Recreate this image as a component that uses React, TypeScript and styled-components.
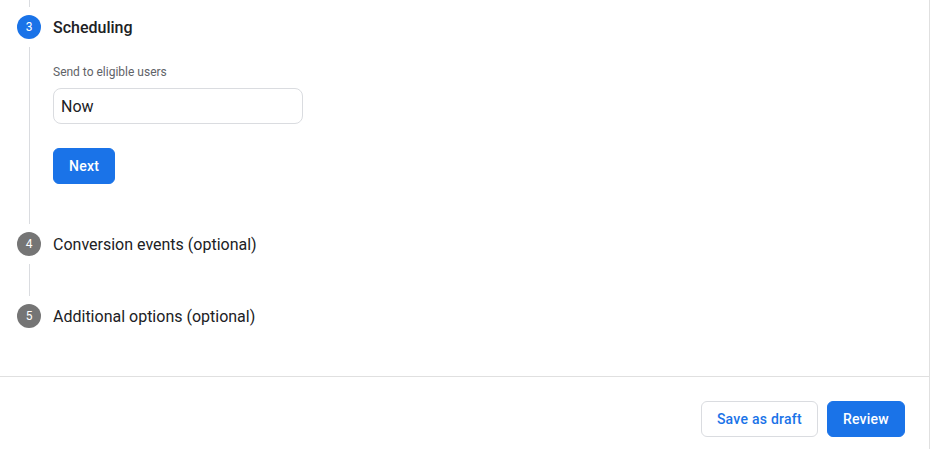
import { createGlobalStyle, styled } from 'styled-components'

const GlobalStyle = createGlobalStyle`
  html, body {
    margin: 0;
    padding: 0;
    background: #fff;
  }
  body {
    font-family: Roboto, "Liberation Sans", Arial, sans-serif;
    color: #202124;
    -webkit-font-smoothing: antialiased;
  }
`

const Page = styled.div`
  width: 929px;
  height: 449px;
  border-right: 1px solid #e0e0e0;
  background: #fff;
  display: flex;
  flex-direction: column;
  overflow: hidden;
`

const Stepper = styled.div`
  height: 376px;
  flex-shrink: 0;
  border-bottom: 1px solid #e0e0e0;
  padding-left: 17px;
  display: flex;
  flex-direction: column;
`

const Tail = styled.div`
  width: 1px;
  height: 7px;
  flex-shrink: 0;
  margin: 0 0 8px 12px;
  background: #dadce0;
`

const Step = styled.div`
  display: flex;
  gap: 12px;
  flex-shrink: 0;
`

const Rail = styled.div`
  width: 24px;
  display: flex;
  flex-direction: column;
  align-items: center;
  flex-shrink: 0;
`

const Circle = styled.div<{ active?: boolean }>`
  width: 24px;
  height: 24px;
  border-radius: 50%;
  background: ${({ active }) => (active ? '#1a73e8' : '#757575')};
  color: #fff;
  font-size: 12px;
  display: flex;
  align-items: center;
  justify-content: center;
  flex-shrink: 0;
`

const Connector = styled.div`
  flex: 1;
  width: 1px;
  margin: 8px 0;
  background: #dadce0;
`

const Body = styled.div<{ last?: boolean }>`
  display: flex;
  flex-direction: column;
  padding-bottom: ${({ last }) => (last ? '0' : '48px')};
`

const Title = styled.div<{ active?: boolean }>`
  font-size: 16px;
  line-height: 24px;
  padding-top: 1px;
  margin-bottom: -1px;
  font-weight: ${({ active }) => (active ? 500 : 400)};
  color: #202124;
`

const Label = styled.label`
  margin-top: 25px;
  font-size: 12px;
  line-height: 16px;
  color: #5f6368;
`

const Input = styled.input`
  margin-top: 8px;
  width: 250px;
  height: 36px;
  box-sizing: border-box;
  border: 1px solid #dadce0;
  border-radius: 8px;
  padding: 0 7px;
  font-family: inherit;
  font-size: 16px;
  color: #202124;
  outline: none;
`

const Button = styled.button<{ outlined?: boolean }>`
  height: 36px;
  box-sizing: border-box;
  padding: 0 15px;
  border-radius: 6px;
  font-family: inherit;
  font-size: 14px;
  font-weight: 500;
  letter-spacing: 0.25px;
  cursor: pointer;
  border: 1px solid ${({ outlined }) => (outlined ? '#dadce0' : '#1a73e8')};
  background: ${({ outlined }) => (outlined ? '#fff' : '#1a73e8')};
  color: ${({ outlined }) => (outlined ? '#1a73e8' : '#fff')};
`

const NextButton = styled(Button)`
  margin-top: 24px;
  align-self: flex-start;
`

const Footer = styled.div`
  display: flex;
  justify-content: flex-end;
  gap: 9px;
  padding: 24px 24px;
`

const steps = [
  { n: 4, title: 'Conversion events (optional)' },
  { n: 5, title: 'Additional options (optional)' },
]

export default function App() {
  return (
    <>
      <GlobalStyle />
      <Page>
        <Stepper>
          <Tail />
          <Step>
            <Rail>
              <Circle active>3</Circle>
              <Connector />
            </Rail>
            <Body>
              <Title active>Scheduling</Title>
              <Label>Send to eligible users</Label>
              <Input defaultValue="Now" readOnly />
              <NextButton>Next</NextButton>
            </Body>
          </Step>
          {steps.map((s, i) => (
            <Step key={s.n}>
              <Rail>
                <Circle>{s.n}</Circle>
                {i < steps.length - 1 && <Connector />}
              </Rail>
              <Body last={i === steps.length - 1}>
                <Title>{s.title}</Title>
              </Body>
            </Step>
          ))}
        </Stepper>
        <Footer>
          <Button outlined>Save as draft</Button>
          <Button>Review</Button>
        </Footer>
      </Page>
    </>
  )
}
